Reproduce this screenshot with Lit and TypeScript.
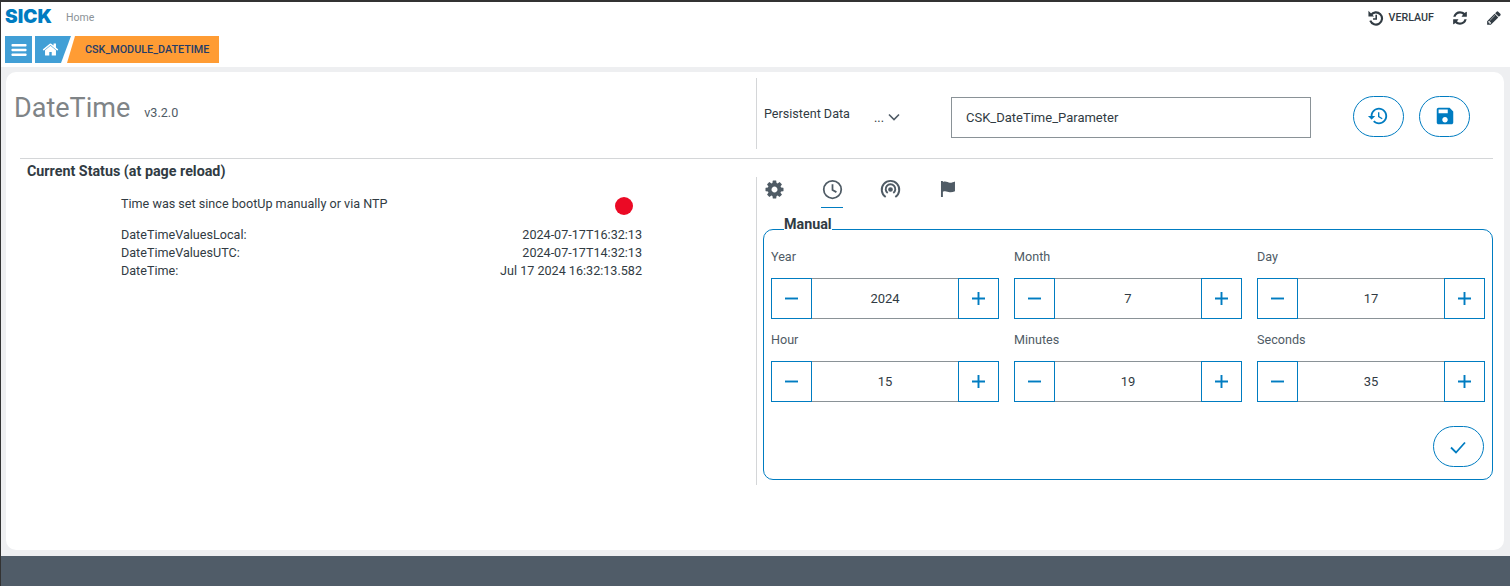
import { LitElement, css, html, svg } from 'lit';
import { customElement } from 'lit/decorators.js';

const faBars = svg`<rect x="2" y="4" width="20" height="3.4" rx="1"/><rect x="2" y="10.3" width="20" height="3.4" rx="1"/><rect x="2" y="16.6" width="20" height="3.4" rx="1"/>`;
const faHome = svg`<path d="M1472 992v480q0 26-19 45t-45 19h-384v-384h-256v384h-384q-26 0-45-19t-19-45v-480q0-1 .5-3t.5-3l575-474 575 474q1 2 1 6zm223-69l-62 74q-8 9-21 11h-3q-13 0-21-7l-692-577-692 577q-12 8-24 7-13-2-21-11l-62-74q-8-10-7-23.5t11-21.5l719-599q32-26 76-26t76 26l244 204v-195q0-14 9-23t23-9h192q14 0 23 9t9 23v408l219 182q10 8 11 21.5t-7 23.5z"/>`;
const faRefresh = svg`<path d="M1639 1056q0 5-1 7-64 268-268 434.5t-478 166.5q-146 0-282.5-55t-243.5-157l-129 129q-19 19-45 19t-45-19-19-45v-448q0-26 19-45t45-19h448q26 0 45 19t19 45-19 45l-137 137q71 66 161 102t187 36q134 0 250-65t186-179q11-17 53-117 8-23 30-23h192q13 0 22.5 9.5t9.5 22.5zm25-800v448q0 26-19 45t-45 19h-448q-26 0-45-19t-19-45 19-45l138-138q-148-137-349-137-134 0-250 65t-186 179q-11 17-53 117-8 23-30 23h-199q-13 0-22.5-9.5t-9.5-22.5v-7q65-268 270-434.5t480-166.5q146 0 284 55.5t245 156.5l130-129q19-19 45-19t45 19 19 45z"/>`;
const faPencil = svg`<path d="M491 1536l91-91-235-235-91 91v107h128v128h107zm523-928q0-22-22-22-10 0-17 7l-542 542q-7 7-7 17 0 22 22 22 10 0 17-7l542-542q7-7 7-17zm-54-192l416 416-832 832h-416v-416zm683 96q0 53-37 90l-166 166-416-416 166-165q36-38 90-38 53 0 91 38l235 234q37 39 37 91z"/>`;
const faCog = svg`<path d="M1152 896q0-106-75-181t-181-75-181 75-75 181 75 181 181 75 181-75 75-181zm512-109v222q0 12-8 23t-20 13l-185 28q-19 54-39 91 35 50 107 138 10 12 10 25t-9 23q-27 37-99 108t-94 71q-12 0-26-9l-138-108q-44 23-91 38-16 136-29 186-7 28-36 28h-222q-14 0-24.5-8.5t-11.5-21.5l-28-184q-49-16-90-37l-141 107q-10 9-25 9-14 0-25-11-126-114-165-168-7-10-7-23 0-12 8-23 15-21 51-66.5t54-70.5q-27-50-41-99l-183-27q-13-2-21-12.5t-8-23.5v-222q0-12 8-23t19-13l186-28q14-46 39-92-40-57-107-138-10-12-10-24 0-10 9-23 26-36 98.5-107.5t94.5-71.5q13 0 26 10l138 107q44-23 91-38 16-136 29-186 7-28 36-28h222q14 0 24.5 8.5t11.5 21.5l28 184q49 16 90 37l142-107q9-9 24-9 13 0 25 10 129 119 165 170 7 8 7 22 0 12-8 23-15 21-51 66.5t-54 70.5q26 50 41 98l183 28q13 2 21 12.5t8 23.5z"/>`;
const mdHistory = svg`<path d="M13 3c-4.97 0-9 4.03-9 9H1l3.89 3.89.07.14L9 12H6c0-3.87 3.13-7 7-7s7 3.13 7 7-3.13 7-7 7c-1.93 0-3.68-.79-4.94-2.06l-1.42 1.42C8.27 19.99 10.51 21 13 21c4.97 0 9-4.03 9-9s-4.03-9-9-9zm-1 5v5l4.28 2.54.72-1.21-3.5-2.08V8H12z"/>`;
const mdSave = svg`<path d="M17 3H5c-1.11 0-2 .9-2 2v14c0 1.1.89 2 2 2h14c1.1 0 2-.9 2-2V7l-4-4zm-5 16c-1.66 0-3-1.34-3-3s1.34-3 3-3 3 1.34 3 3-1.34 3-3 3zm3-10H5V5h10v4z"/>`;

@customElement('app-root')
export class AppRoot extends LitElement {
  static styles = css`
    :host {
      display: flex;
      flex-direction: column;
      height: 586px;
      box-sizing: border-box;
      border-top: 2px solid #333;
      border-left: 1px solid #333;
      background: #eeeff1;
      font-family: Roboto, "Liberation Sans", sans-serif;
      font-size: 12.6px;
      color: #313b43;
    }

    svg {
      display: block;
      fill: currentColor;
    }

    /* header */
    .header {
      height: 65px;
      flex: none;
      background: #fff;
      padding: 0 8px 0 4px;
      box-sizing: border-box;
      display: flex;
      flex-direction: column;
    }

    .topbar {
      height: 34px;
      display: flex;
      align-items: center;
    }

    .logo {
      font-family: Inter, sans-serif;
      font-weight: 900;
      font-size: 19px;
      letter-spacing: 0px;
      color: #007cc1;
      width: 61px;
      line-height: 18px;
      margin-top: -5px;
    }

    .crumb-home {
      font-size: 10.5px;
      color: #8b9297;
      margin-top: -4px;
    }

    .tools {
      margin-left: auto;
      display: flex;
      align-items: center;
      margin-top: -3px;
      color: #313b43;
    }

    .tools .verlauf {
      font-size: 10.7px;
      font-weight: 500;
      margin: 0 18px 0 5px;
    }

    .tools svg.refresh {
      width: 16px;
      height: 16px;
      margin-right: 18px;
    }

    .tools svg.pencil {
      width: 16px;
      height: 16px;
    }

    .tools svg.restore {
      width: 17px;
      height: 17px;
    }

    .nav {
      display: flex;
      height: 27px;
    }

    .tile {
      background: #419fd6;
      color: #fff;
      display: flex;
      align-items: center;
      justify-content: center;
    }

    .tile.menu {
      width: 27px;
      margin-right: 3px;
    }

    .tile.menu svg {
      width: 18px;
      height: 18px;
    }

    .tile.home {
      width: 36px;
      padding-right: 6px;
      box-sizing: border-box;
      clip-path: polygon(0 0, 100% 0, 26px 100%, 0 100%);
    }

    .tile.home svg {
      width: 17px;
      height: 17px;
    }

    .module {
      width: 152px;
      margin-left: -4px;
      padding-left: 18px;
      box-sizing: border-box;
      background: #ff9c34;
      color: #253c68;
      font-size: 10.8px;
      font-weight: 500;
      line-height: 27px;
      clip-path: polygon(8px 0, 100% 0, 100% 100%, 0 100%);
    }

    /* card */
    .card {
      flex: none;
      height: 478px;
      margin: 5px 6px 6px 5px;
      background: #fff;
      border-radius: 10px;
      box-sizing: border-box;
      display: flex;
      flex-direction: column;
    }

    .head {
      height: 87px;
      flex: none;
      display: flex;
      align-items: flex-start;
      box-sizing: border-box;
      margin-left: 14px;
      margin-right: 11px;
      border-bottom: 1px solid #d4d6d8;
    }

    .title {
      width: 742px;
      flex: none;
      display: flex;
      align-items: baseline;
      padding: 18px 0 0 0;
      margin-left: -6px;
      box-sizing: border-box;
    }

    .title h1 {
      margin: 0;
      font-size: 27px;
      font-weight: 400;
      color: #7f8487;
      line-height: 36px;
    }

    .title span {
      margin-left: 14px;
      font-size: 12.6px;
      color: #4f5b65;
    }

    .persist {
      flex: 1;
      height: 71px;
      margin-top: 6px;
      border-left: 1px solid #d4d6d8;
      padding-left: 7px;
      box-sizing: border-box;
      display: flex;
      align-items: center;
      padding-top: 7px;
    }

    .persist .lbl {
      width: 110px;
      flex: none;
      margin-top: -8px;
    }

    .persist .dots {
      width: 14px;
      flex: none;
    }

    .persist svg.chev {
      width: 12px;
      height: 8px;
      color: #4f5b65;
      fill: none;
      stroke: currentColor;
      stroke-width: 1.6;
    }

    .persist .name {
      width: 360px;
      height: 41px;
      margin-left: 51px;
      box-sizing: border-box;
      border: 1px solid #8a9297;
      padding-left: 14px;
      font-size: 13px;
      line-height: 39px;
      flex: none;
    }

    .round {
      width: 51px;
      height: 41px;
      box-sizing: border-box;
      border: 1px solid #007cc1;
      border-radius: 21px;
      color: #007cc1;
      background: #fff;
      display: flex;
      align-items: center;
      justify-content: center;
      flex: none;
    }

    .round svg {
      width: 22px;
      height: 22px;
    }

    .persist .round {
      margin-top: -2px;
    }

    .persist .round.first {
      margin-left: 42px;
      padding-right: 2px;
    }

    .persist .round.second {
      margin-left: 15px;
    }

    .body {
      display: flex;
      flex: 1;
      min-height: 0;
    }

    .status {
      width: 750px;
      flex: none;
      box-sizing: border-box;
      padding: 3px 0 0 21px;
    }

    .status h2 {
      margin: 0;
      font-size: 14.3px;
      font-weight: 700;
      line-height: 18px;
      color: #313b43;
    }

    .rows {
      width: 521px;
      margin: 15px 0 0 94px;
    }

    .row {
      display: flex;
      justify-content: space-between;
      line-height: 18px;
    }

    .row.flag {
      margin-bottom: 13px;
      height: 18px;
    }

    .dot {
      width: 18px;
      height: 18px;
      border-radius: 50%;
      background: #eb0a25;
      margin: 2px 9px 0 0;
    }

    .settings {
      flex: none;
      width: 737px;
      height: 308px;
      margin-top: 18px;
      border-left: 1px solid #d4d6d8;
      padding-left: 6px;
      box-sizing: border-box;
    }

    .tabs {
      display: flex;
      height: 31px;
      margin-bottom: 8px;
    }

    .tab {
      width: 22px;
      height: 31px;
      box-sizing: border-box;
      display: flex;
      justify-content: center;
      padding-top: 2px;
      color: #4f5b65;
    }

    .tab svg {
      width: 21px;
      height: 21px;
    }

    .tab.clock { margin-left: 36px; border-bottom: 1px solid #007cc1; }
    .tab.cast { margin-left: 36px; }
    .tab.flg { margin-left: 36px; }

    fieldset {
      margin: 0;
      padding: 0 7px;
      width: 730px;
      height: 264px;
      box-sizing: border-box;
      border: 1px solid #007cc1;
      border-radius: 10px;
    }

    legend {
      margin-left: 13px;
      padding: 0 0 11px;
      font-size: 14.3px;
      font-weight: 700;
      line-height: 16px;
    }

    .grid {
      display: grid;
      grid-template-columns: repeat(3, 228px);
      column-gap: 15px;
      row-gap: 12px;
      margin-top: 5px;
    }

    .field label {
      display: block;
      line-height: 18px;
      height: 30px;
      color: #4f5b65;
    }

    .stepper {
      display: flex;
      height: 41px;
    }

    .stepper .btn {
      width: 41px;
      flex: none;
      box-sizing: border-box;
      border: 1px solid #007cc1;
      color: #007cc1;
      display: flex;
      align-items: center;
      justify-content: center;
    }

    .stepper .btn svg {
      width: 13px;
      height: 13px;
      fill: none;
      stroke: currentColor;
      stroke-width: 2.2;
    }

    .stepper .val {
      flex: 1;
      box-sizing: border-box;
      border-top: 1px solid #8a9297;
      border-bottom: 1px solid #8a9297;
      text-align: center;
      line-height: 39px;
      font-size: 13px;
    }

    .confirm {
      display: flex;
      justify-content: flex-end;
      margin-top: 24px;
      padding-right: 1px;
    }

    .confirm .round {
      padding-right: 2px;
    }

    .confirm svg {
      fill: none;
      stroke: currentColor;
      stroke-width: 1.8;
      width: 18px;
      height: 18px;
    }

    .footer {
      flex: 1;
      background: #505c68;
    }
  `;

  private fields = [
    ['Year', '2024'],
    ['Month', '7'],
    ['Day', '17'],
    ['Hour', '15'],
    ['Minutes', '19'],
    ['Seconds', '35'],
  ];

  renderField(label: string, value: string) {
    return html`
      <div class="field">
        <label>${label}</label>
        <div class="stepper">
          <div class="btn"><svg viewBox="0 0 15 15"><path d="M0 7.5h15"/></svg></div>
          <div class="val">${value}</div>
          <div class="btn"><svg viewBox="0 0 15 15"><path d="M0 7.5h15M7.5 0v15"/></svg></div>
        </div>
      </div>
    `;
  }

  render() {
    return html`
      <div class="header">
        <div class="topbar">
          <div class="logo">SICK</div>
          <div class="crumb-home">Home</div>
          <div class="tools">
            <svg class="restore" viewBox="0 0 24 24">
              <path d="M5.5 8.5A8.6 8.6 0 1 1 4.6 16.5" fill="none" stroke="currentColor" stroke-width="3"/>
              <path d="M2 2.5l8 8H2z"/>
              <path d="M13 8v6H8.5" fill="none" stroke="currentColor" stroke-width="2.2"/>
            </svg>
            <span class="verlauf">VERLAUF</span>
            <svg class="refresh" viewBox="0 0 1792 1792">${faRefresh}</svg>
            <svg class="pencil" viewBox="0 0 1792 1792">${faPencil}</svg>
          </div>
        </div>
        <div class="nav">
          <div class="tile menu"><svg viewBox="0 0 24 24">${faBars}</svg></div>
          <div class="tile home"><svg viewBox="0 0 1792 1792">${faHome}</svg></div>
          <div class="module">CSK_MODULE_DATETIME</div>
        </div>
      </div>

      <div class="card">
        <div class="head">
          <div class="title">
            <h1>DateTime</h1>
            <span>v3.2.0</span>
          </div>
          <div class="persist">
            <div class="lbl">Persistent Data</div>
            <div class="dots">...</div>
            <svg class="chev" viewBox="0 0 12 8"><path d="M1 1.5l5 5 5-5"/></svg>
            <div class="name">CSK_DateTime_Parameter</div>
            <div class="round first"><svg viewBox="0 0 24 24">${mdHistory}</svg></div>
            <div class="round second"><svg viewBox="0 0 24 24">${mdSave}</svg></div>
          </div>
        </div>

        <div class="body">
          <div class="status">
            <h2>Current Status (at page reload)</h2>
            <div class="rows">
              <div class="row flag"><span>Time was set since bootUp manually or via NTP</span><span class="dot"></span></div>
              <div class="row"><span>DateTimeValuesLocal:</span><span>2024-07-17T16:32:13</span></div>
              <div class="row"><span>DateTimeValuesUTC:</span><span>2024-07-17T14:32:13</span></div>
              <div class="row"><span>DateTime:</span><span>Jul 17 2024 16:32:13.582</span></div>
            </div>
          </div>

          <div class="settings">
            <div class="tabs">
              <div class="tab gear"><svg viewBox="0 0 1792 1792">${faCog}</svg></div>
              <div class="tab clock">
                <svg viewBox="0 0 24 24" style="fill:none;stroke:currentColor;stroke-width:2">
                  <circle cx="12" cy="12" r="10"/><path d="M12 6v6.5l4.5 2.5"/>
                </svg>
              </div>
              <div class="tab cast">
                <svg viewBox="0 0 24 24" style="fill:none;stroke:currentColor;stroke-width:2.2">
                  <path d="M6.5 20.5a10 10 0 1 1 11 0"/><path d="M8.8 16a5.5 5.5 0 1 1 6.4 0"/>
                  <circle cx="12" cy="12" r="1.6" fill="currentColor"/>
                </svg>
              </div>
              <div class="tab flg">
                <svg viewBox="0 0 24 24"><path d="M3.4 2.3h2.2v1.2c3.5-1.6 5.5.7 8 .8 2 .1 4-.6 5.8-1.4V14c-2 1-4 1.4-6 1.2-2.5-.3-4.5-2-7.8-.6v6H3.4z"/></svg>
              </div>
            </div>

            <fieldset>
              <legend>Manual</legend>
              <div class="grid">
                ${this.fields.map(([l, v]) => this.renderField(l, v))}
              </div>
              <div class="confirm">
                <div class="round"><svg viewBox="0 0 18 18"><path d="M2 9.5l5 5L16 4.5"/></svg></div>
              </div>
            </fieldset>
          </div>
        </div>
      </div>

      <div class="footer"></div>
    `;
  }
}
